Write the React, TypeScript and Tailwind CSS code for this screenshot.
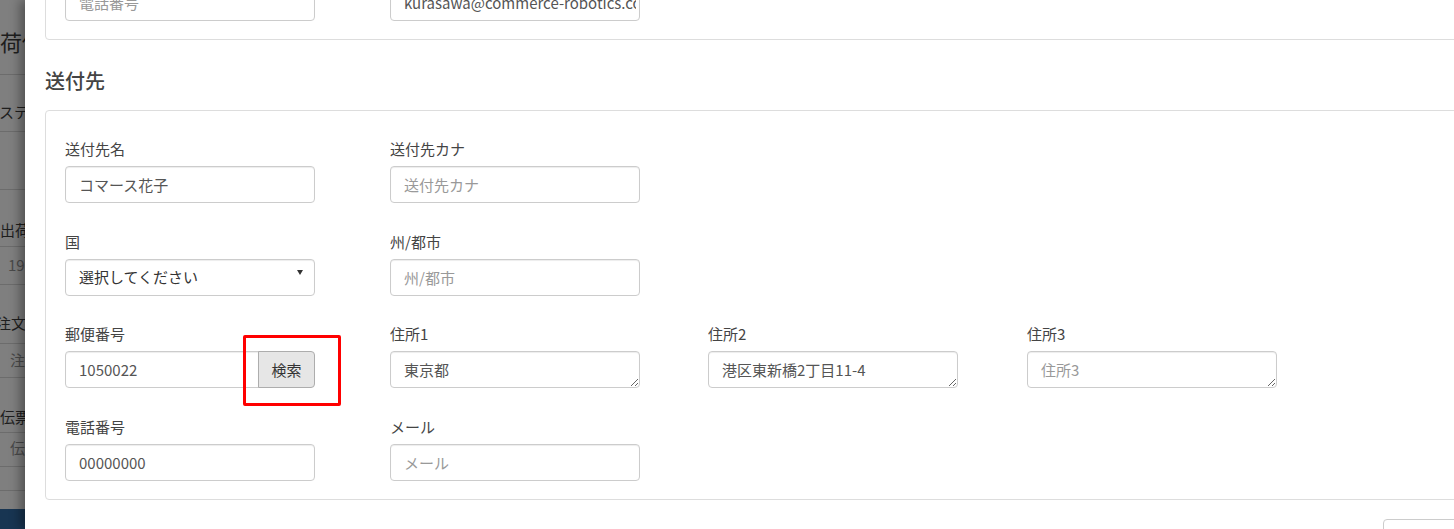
import React from "react";

const font = "font-['Noto_Sans_CJK_JP','Liberation_Sans',sans-serif]";

const Label = ({ children }: { children: React.ReactNode }) => (
  <div className="h-[20px] leading-[20px] text-[15px] text-[#444] mb-[7px] whitespace-nowrap">
    {children}
  </div>
);

const TextInput = ({
  value,
  placeholder,
  className = "",
}: {
  value?: string;
  placeholder?: string;
  className?: string;
}) => (
  <input
    readOnly
    value={value ?? ""}
    placeholder={placeholder}
    className={`block w-[250px] h-[37px] border border-[#ccc] rounded-[4px] px-[13px] text-[15px] text-[#555] placeholder:text-[#999] bg-white shadow-[inset_0_1px_1px_rgba(0,0,0,0.075)] outline-none ${className}`}
  />
);

const TextArea = ({ value, placeholder }: { value?: string; placeholder?: string }) => (
  <textarea
    readOnly
    rows={1}
    value={value ?? ""}
    placeholder={placeholder}
    className="block w-[250px] h-[37px] border border-[#ccc] rounded-[4px] px-[13px] py-[7px] leading-[21px] text-[15px] text-[#555] placeholder:text-[#999] bg-white shadow-[inset_0_1px_1px_rgba(0,0,0,0.075)] outline-none overflow-hidden"
  />
);

const Field = ({ label, children }: { label: string; children: React.ReactNode }) => (
  <div>
    <Label>{label}</Label>
    {children}
  </div>
);

// dimmed page that shows behind the modal
const Backdrop = () => {
  const rows: { h: string; text?: string; cls?: string }[] = [
    { h: "h-[75px]", text: "出荷依頼", cls: "text-[22px] leading-[30px] pt-[26px] -ml-[22px] text-[#1e1e1e]" },
    { h: "h-[57px]", text: "ステータス", cls: "text-[15px] leading-[20px] pt-[27px] -ml-[1px] text-[#1e1e1e]" },
    { h: "h-[58px]" },
    { h: "h-[57px]", text: "出荷予定日", cls: "text-[15px] leading-[20px] pt-[30px] text-[#1e1e1e]" },
    { h: "h-[38px]", text: "1970/01/01", cls: "text-[15px] leading-[20px] pt-[8px] ml-[8px] text-[#4a4a4a]" },
    { h: "h-[59px]", text: "注文番号", cls: "text-[15px] leading-[20px] pt-[28px] -ml-[4px] text-[#1e1e1e]" },
    { h: "h-[34px]", text: "注文番号", cls: "text-[15px] leading-[20px] pt-[6px] ml-[10px] text-[#4a4a4a]" },
    { h: "h-[55px]", text: "伝票番号", cls: "text-[15px] leading-[20px] pt-[29px] text-[#1e1e1e]" },
    { h: "h-[34px]", text: "伝票番号", cls: "text-[15px] leading-[20px] pt-[5px] ml-[10px] text-[#4a4a4a]" },
    { h: "h-[24px]" },
  ];
  return (
    <div className="w-[25px] shrink-0 h-full bg-[#7f7f7f] overflow-hidden flex flex-col">
      {rows.map((r, i) => (
        <div key={i} className={`${r.h} shrink-0 border-b border-[#6c6c6c] whitespace-nowrap`}>
          {r.text && <div className={r.cls}>{r.text}</div>}
        </div>
      ))}
      <div className="h-[18px] shrink-0" />
      <div className="flex-1 bg-[#183552]" />
    </div>
  );
};

export default function App() {
  return (
    <div className={`${font} w-[1454px] h-[529px] overflow-hidden flex bg-[#7f7f7f]`}>
      <Backdrop />
      <div className="relative w-[1520px] shrink-0 h-full bg-white shadow-[-5px_0_10px_rgba(0,0,0,0.35)] px-[20px]">
        <div className="-mt-[72px]">
          {/* contact card (scrolled off the top) */}
          <div className="w-[1440px] border border-[#ddd] rounded-[4px] pt-[28px] pb-[18px] px-[19px]">
            <div className="flex">
              <div className="w-[325px]">
                <Field label="電話番号">
                  <TextInput placeholder="電話番号" />
                </Field>
              </div>
              <div className="w-[318px]">
                <Field label="メール">
                  <TextInput value="kurasawa@commerce-robotics.co.jp" className="pr-[3px]" />
                </Field>
              </div>
            </div>
          </div>

          <h4 className="mt-[28px] mb-[16px] text-[20px] leading-[26px] font-medium text-[#444]">送付先</h4>

          {/* shipping destination card */}
          <div className="w-[1440px] border border-[#ddd] rounded-[4px] pt-[28px] pb-[18px] px-[19px] flex flex-col gap-[28.7px]">
            <div className="flex">
              <div className="w-[325px]">
                <Field label="送付先名">
                  <TextInput value="コマース花子" />
                </Field>
              </div>
              <div className="w-[318px]">
                <Field label="送付先カナ">
                  <TextInput placeholder="送付先カナ" />
                </Field>
              </div>
            </div>

            <div className="flex">
              <div className="w-[325px]">
                <Field label="国">
                  <div className="w-[250px] h-[37px] border border-[#ccc] rounded-[4px] pl-[13px] pr-[11px] flex items-center justify-between text-[15px] text-[#333] shadow-[inset_0_1px_1px_rgba(0,0,0,0.075)]">
                    <span>選択してください</span>
                    <span className="mb-[9px] w-0 h-0 border-l-[3.5px] border-r-[3.5px] border-t-[5px] border-l-transparent border-r-transparent border-t-[#333]" />
                  </div>
                </Field>
              </div>
              <div className="w-[318px]">
                <Field label="州/都市">
                  <TextInput placeholder="州/都市" />
                </Field>
              </div>
            </div>

            <div className="flex">
              <div className="w-[325px] relative">
                <Field label="郵便番号">
                  <div className="flex w-[250px] h-[37px]">
                    <input
                      readOnly
                      value="1050022"
                      className="w-[194px] h-full border border-[#ccc] rounded-l-[4px] px-[13px] text-[15px] text-[#555] shadow-[inset_0_1px_1px_rgba(0,0,0,0.075)] outline-none"
                    />
                    <button
                      type="button"
                      className="flex-1 h-full -ml-px border border-[#adadad] rounded-r-[4px] bg-[#e6e6e6] text-[15px] text-[#333]"
                    >
                      検索
                    </button>
                  </div>
                </Field>
                <div className="absolute left-[178px] top-[11px] w-[98px] h-[71px] border-[3px] border-[#ff0000] rounded-[2px] pointer-events-none" />
              </div>
              <div className="w-[318px]">
                <Field label="住所1">
                  <TextArea value="東京都" />
                </Field>
              </div>
              <div className="w-[319px]">
                <Field label="住所2">
                  <TextArea value="港区東新橋2丁目11-4" />
                </Field>
              </div>
              <div className="w-[319px]">
                <Field label="住所3">
                  <TextArea placeholder="住所3" />
                </Field>
              </div>
            </div>

            <div className="flex">
              <div className="w-[325px]">
                <Field label="電話番号">
                  <TextInput value="00000000" />
                </Field>
              </div>
              <div className="w-[318px]">
                <Field label="メール">
                  <TextInput placeholder="メール" />
                </Field>
              </div>
            </div>
          </div>

          <div className="w-[1440px] flex justify-end mt-[19px]">
            <button type="button" className="w-[102px] h-[36px] border border-[#ccc] rounded-[4px] bg-white text-[15px] text-[#333]">
              閉じる
            </button>
          </div>
        </div>
      </div>
    </div>
  );
}
